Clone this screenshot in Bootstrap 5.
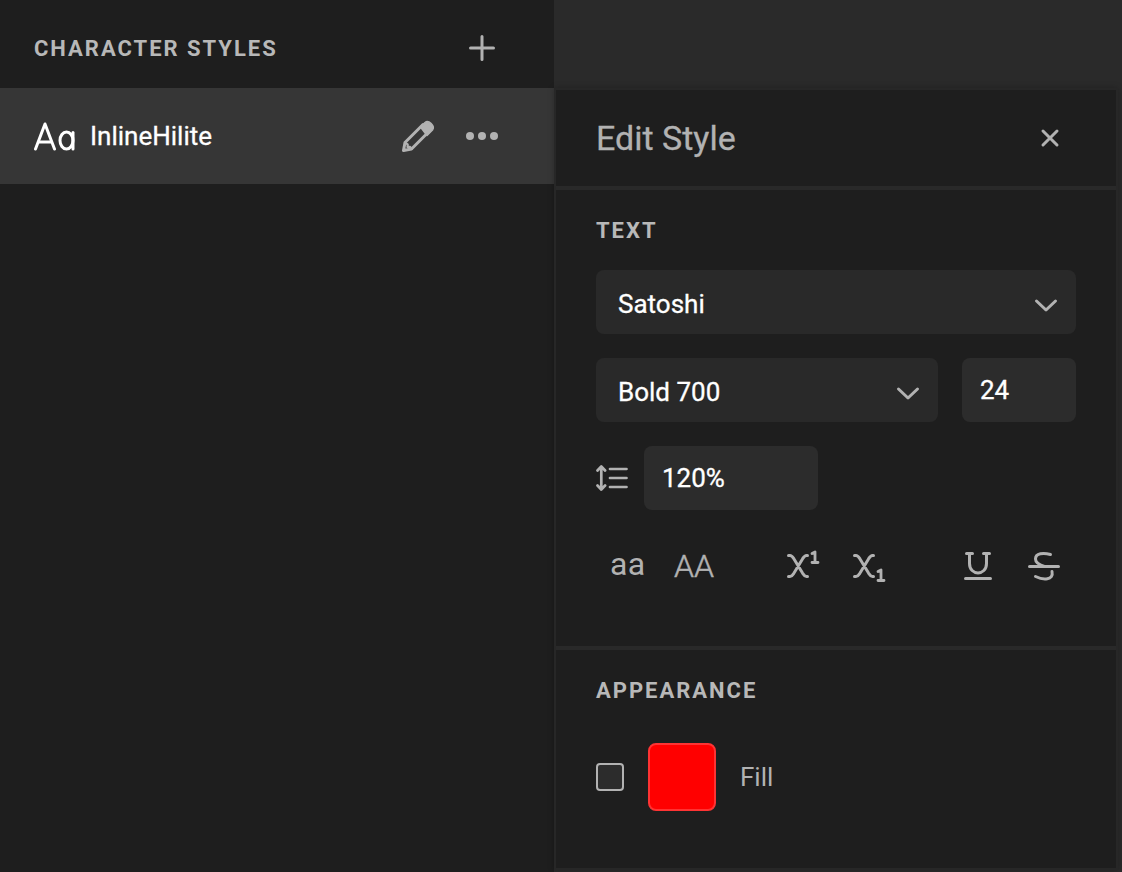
<!DOCTYPE html>
<html lang="en" data-bs-theme="dark">
<head>
<meta charset="utf-8">
<meta name="viewport" content="width=device-width, initial-scale=1">
<title>Character Styles</title>
<link href="https://cdn.jsdelivr.net/npm/bootstrap@5.3.0/dist/css/bootstrap.min.css" rel="stylesheet">
<style>
  body { background: #2a2a2a; color: #b2b2b2; font-family: Roboto, sans-serif; font-size: 26px; line-height: 32px; }
  svg { display: block; flex: none; fill: none; stroke: #b2b2b2; stroke-width: 3; stroke-linecap: round; stroke-linejoin: round; }
  .styles-pane { width: 554px; background: #1e1e1e; }
  .styles-head { height: 88px; padding: 8px 56px 0 34px; }
  .styles-head .caption { padding-top: 1px; }
  .style-item { height: 96px; padding: 0 54px 0 34px; background: #363636; }
  .caption { font-size: 22px; line-height: 28px; font-weight: 700; letter-spacing: 1.98px; color: #b8b8b8; margin: 0; }
  .bright { color: #fff; -webkit-text-stroke: .3px #fff; }
  .editor { width: 564px; margin-top: 88px; border: 2px solid #272727; background: #1e1e1e; height: 782px; box-shadow: 0 0 6px rgba(0,0,0,.25); }
  .editor-head { height: 100px; padding: 0 54px 0 40px; border-bottom: 4px solid #292929; }
  .editor-title { font-size: 34px; line-height: 40px; font-weight: 400; margin: 0; color: #b2b2b2; -webkit-text-stroke: .3px #b2b2b2; }
  .text-part { height: 460px; padding: 27px 40px 0; border-bottom: 4px solid #292929; }
  .text-part .caption { margin-bottom: 25px; }
  .look-part { padding: 27px 40px 0; }
  .fill-row { margin-top: 38px; }
  .field { height: 64px; border: 0; border-radius: 8px; background: #292929; color: #fff; padding: 4px 18px 0 22px; text-align: left; -webkit-text-stroke: .3px #fff; }
  .field svg { margin-top: 2px; }
  .field-value { background: #2c2c2c; padding: 0 18px; }
  .size-field { width: 114px; }
  .height-field { width: 174px; }
  .tools { margin-top: 36px; height: 40px; }
  .check { width: 28px; height: 28px; border: 2px solid #b2b2b2; border-radius: 4px; background: #2c2c2c; }
  .swatch { width: 68px; height: 68px; border: 2px solid #ff3333; border-radius: 8px; background: #f00; }
  .case { line-height: 40px; font-size: 32px; }
  .case-lower { margin: -2px 0 0 14px; width: 64px; letter-spacing: .3px; }
  .case-upper { width: 112px; font-weight: 300; -webkit-text-stroke: .5px #b2b2b2; }
</style>
</head>
<body class="vh-100 overflow-hidden">
<main class="d-flex h-100 align-items-start">
  <section class="styles-pane h-100">
    <header class="styles-head d-flex align-items-center justify-content-between">
      <h2 class="caption">CHARACTER STYLES</h2>
      <svg width="32" height="32" viewBox="0 0 32 32"><path d="M16 4.500v23M4.500 16h23"/></svg>
    </header>
    <div class="style-item d-flex align-items-center">
      <svg width="44" height="36" viewBox="0 0 44 36" style="stroke:#fff"><polyline points="1.500,31 11,6 20.500,31"/><line x1="5" y1="24" x2="17" y2="24"/><ellipse cx="32.500" cy="22.500" rx="6.500" ry="8.500"/><line x1="39" y1="14.500" x2="39" y2="31"/></svg>
      <span class="bright ms-2 ps-1 me-auto">InlineHilite</span>
      <svg class="me-4" width="40" height="40" viewBox="0 0 40 40"><path d="M9 26.500 27 8.500l6.500 6.500L15.500 33 7.500 34.500Z"/><path d="m9.500 27 2.200 1.400-.2 2.700 2.600-.2 1.600 2" stroke-width="2.200"/><path d="m24.500 11 4.500-4.500c3.500-3 10.500 3.500 7.500 7.500L31 19.500Z" fill="#b2b2b2" stroke-width="1.500"/></svg>
      <svg class="ms-1" width="36" height="36" viewBox="0 0 36 36" style="fill:#b2b2b2;stroke:none"><circle cx="6" cy="18" r="4"/><circle cx="18" cy="18" r="4"/><circle cx="30" cy="18" r="4"/></svg>
    </div>
  </section>
  <section class="editor">
    <header class="editor-head d-flex align-items-center justify-content-between">
      <h1 class="editor-title">Edit Style</h1>
      <svg width="24" height="24" viewBox="0 0 24 24"><path d="m5 5 14 14M19 5 5 19"/></svg>
    </header>
    <section class="text-part">
      <h2 class="caption">TEXT</h2>
      <button class="field d-flex align-items-center justify-content-between w-100" type="button">Satoshi <svg width="24" height="16" viewBox="0 0 24 16"><path d="m2.500 4 9.500 9 9.500-9"/></svg></button>
      <div class="d-flex gap-4 mt-4">
        <button class="field d-flex align-items-center justify-content-between flex-fill" type="button">Bold 700 <svg width="24" height="16" viewBox="0 0 24 16"><path d="m2.500 4 9.500 9 9.500-9"/></svg></button>
        <div class="field field-value size-field d-flex align-items-center">24</div>
      </div>
      <div class="d-flex align-items-center gap-3 mt-4">
        <svg width="32" height="28" viewBox="0 0 32 28" stroke-width="2.700"><path d="M5.300 3.500v21M1.500 6.500l3.800-4 3.800 4M1.500 21.500l3.800 4 3.800-4M14 5h16.500M14 14h16.500M14 23h16.500" style="stroke-width:2.700"/></svg>
        <div class="field field-value height-field d-flex align-items-center">120%</div>
      </div>
      <div class="tools d-flex align-items-start">
        <span class="case case-lower">aa</span>
        <span class="case case-upper">AA</span>
        <svg width="66" height="36" viewBox="786 546 66 36"><path d="M788.500 555.500h1.500c2 0 3 2 4 3.500l8.500 14c1 1.500 2 3.500 4 3.500h1M788.500 576.500h1.500c2 0 3-2 4-3.500l8.500-14c1-1.500 2-3.500 4-3.500h1"/><path d="m812 553.500 3-1.500v10.500M812 562.500h6" stroke-width="2.800"/></svg>
        <svg width="112" height="40" viewBox="852 546 112 40"><path d="M854.500 555.500h1.500c2 0 3 2 4 3.500l8.500 14c1 1.500 2 3.500 4 3.500h1M854.500 576.500h1.500c2 0 3-2 4-3.500l8.500-14c1-1.500 2-3.500 4-3.500h1"/><path d="m878 571.500 3-1.500v10.500M878 580.500h6" stroke-width="2.800"/></svg>
        <svg width="64" height="36" viewBox="964 546 64 36"><path d="M966.500 553.500h6M983.500 553.500h6M969.500 553.500v10c0 12.500 17 12.500 17 0v-10M965.500 578.500h25"/></svg>
        <svg width="34" height="36" viewBox="1028 546 34 36"><path d="M1029.500 566.500h29M1050.500 554.500c-7-2-15-1.500-15 4.500 0 4 4 6 9 7.500M1052 571.500c2 9-9 8.500-16.500 5"/></svg>
      </div>
    </section>
    <section class="look-part">
      <h2 class="caption">APPEARANCE</h2>
      <div class="fill-row d-flex align-items-center gap-4">
        <span class="check"></span><span class="swatch"></span><span>Fill</span>
      </div>
    </section>
  </section>
</main>
<script src="https://cdn.jsdelivr.net/npm/bootstrap@5.3.0/dist/js/bootstrap.bundle.min.js"></script>
</body>
</html>
